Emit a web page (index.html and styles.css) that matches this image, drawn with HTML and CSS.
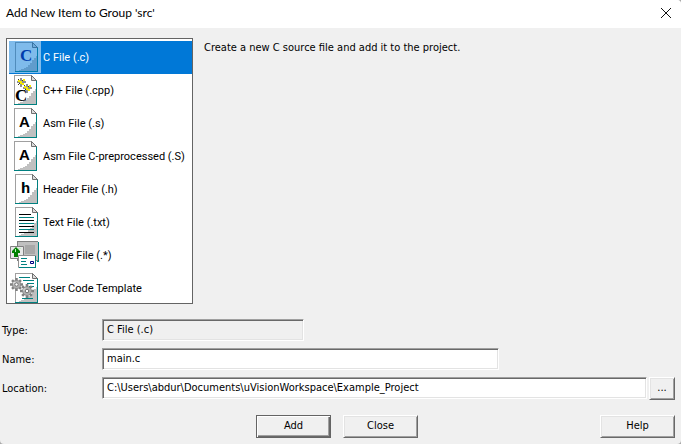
FILE: index.html
```html
<!DOCTYPE html>
<html lang="en">
<head>
    <meta charset="utf-8">
    <title>Add New Item to Group 'src'</title>
    <link rel="stylesheet" href="styles.css">
</head>
<body>
    <svg class="defs" aria-hidden="true">
        <symbol id="page" viewBox="0 0 32 32">
            <path fill="#fff" d="M6 1h18l5 5v25H6z"/>
            <path fill="#c0c0c0" d="M28 15v15H10v-1h2v-1h3v-1h2v-1h2v-2h2v-2h2v-3h2v-2h2v-2z"/>
            <path fill="#a0a0a0" d="M6 1h18v1H7v28H6z"/>
            <path fill="#008080" d="M28 6h1v25H6v-1h22z"/>
            <path fill="#dcdcdc" stroke="#707070" d="M23.500 1.500v5h5z"/>
        </symbol>
        <symbol id="gear" viewBox="0 0 16 16">
            <path fill="none" stroke="#808080" stroke-width="3" d="M8 0v16M0 8h16M2.500 2.500l11 11M13.500 2.500l-11 11"/>
            <circle cx="8" cy="8" r="5" fill="#b0b0b0" stroke="#888"/>
            <path fill="#e0e0e0" d="M4 5h3v1H5v2H4z"/>
            <circle cx="8" cy="8" r="2" fill="#fff" stroke="#666"/>
        </symbol>
    </svg>

    <form class="dialog">
        <header class="titlebar">
            <h1>Add New Item to Group 'src'</h1>
            <button type="button" class="close" aria-label="Close window">
                <svg width="12" height="12" viewBox="0 0 12 12"><path d="M1 1l10 10M11 1L1 11" fill="none" stroke="#111"/></svg>
            </button>
        </header>

        <main class="content">
            <div class="types" role="radiogroup" aria-label="Item type">
                <label class="item">
                    <input type="radio" name="type" checked>
                    <svg class="icon" viewBox="0 0 32 32"><use href="#page"/><text x="11" y="20" class="serif navy">C</text></svg>
                    <span>C File (.c)</span>
                </label>
                <label class="item">
                    <input type="radio" name="type">
                    <svg class="icon" viewBox="0 0 32 32">
                        <use href="#page" x="-1"/>
                        <path d="M8 8h9M12 4v9M14 14h9M18 10v9" fill="none" stroke="#909090" stroke-width="2"/>
                        <path d="M9 5l6 6M15 5l-6 6M15 11l6 6M21 11l-6 6" fill="none" stroke="#404020" stroke-width="1"/>
                        <path d="M9 6h2v1h2v2h2v2h-2v-1h-2V8H9zM14 5h2v2h-2zM15 12h2v1h2v2h2v2h-2v-1h-2v-2h-2zM20 11h2v2h-2z" fill="#f4e800"/>
                        <text x="6" y="27" class="serif">C</text>
                    </svg>
                    <span>C++ File (.cpp)</span>
                </label>
                <label class="item">
                    <input type="radio" name="type">
                    <svg class="icon" viewBox="0 0 32 32"><use href="#page" x="-1"/><text x="10" y="20" class="sans">A</text></svg>
                    <span>Asm File (.s)</span>
                </label>
                <label class="item">
                    <input type="radio" name="type">
                    <svg class="icon" viewBox="0 0 32 32"><use href="#page" x="-1"/><text x="10" y="20" class="sans">A</text></svg>
                    <span>Asm File C-preprocessed (.S)</span>
                </label>
                <label class="item">
                    <input type="radio" name="type">
                    <svg class="icon" viewBox="0 0 32 32"><use href="#page"/><path fill="#40e0f0" d="M15 9h1v5h-1zM15 15h1v5h-1z"/><text x="12" y="20" class="sans">h</text></svg>
                    <span>Header File (.h)</span>
                </label>
                <label class="item">
                    <input type="radio" name="type">
                    <svg class="icon" viewBox="0 0 32 32">
                        <use href="#page"/>
                        <path fill="#000" d="M10 8h12v1H10zM10 14h15v1H10zM10 20h15v1H10zM10 26h15v1H10z"/>
                        <path fill="#008080" d="M10 11h15v1H10zM10 17h15v1H10zM10 23h15v1H10z"/>
                    </svg>
                    <span>Text File (.txt)</span>
                </label>
                <label class="item">
                    <input type="radio" name="type">
                    <svg class="icon" viewBox="0 0 32 32">
                        <path fill="#808080" d="M8 2h21v20H8z"/>
                        <path fill="#c0c0c0" d="M9 3h20v18H9z"/>
                        <path fill="#a8a8a8" d="M16 6h10v9H16z"/>
                        <path fill="#008080" d="M29 3h1v20h-2v-1h1z"/>
                        <path fill="#e8e8e8" stroke="#808080" d="M1.500 7.500h13v12h-13z"/>
                        <path fill="#008000" d="M7 8l4 4v2H9v4H5v-4H3v-2z"/>
                        <path fill="#c0f0c0" d="M6 10h1v3H6zM9 9h3v1H9z"/>
                        <path fill="#fff" stroke="#909090" d="M9.500 16.500h17v12h-17z"/>
                        <path fill="#008080" d="M26 17h1v12H10v-1h16zM12 19h6v1h-6zM12 22h5v1h-5zM12 25h6v1h-6z"/>
                        <path fill="#fff" stroke="#000080" d="M21.500 22.500h3v2h-3z"/>
                    </svg>
                    <span>Image File (.*)</span>
                </label>
                <label class="item">
                    <input type="radio" name="type">
                    <svg class="icon" viewBox="0 0 32 32">
                        <use href="#page"/>
                        <path fill="#008080" d="M10 5h11v1H10zM14 8h11v1H14zM18 11h7v1h-7zM20 14h5v1h-5zM13 26h11v1H13z"/>
                        <use href="#gear" x="1" y="6" width="13" height="13"/>
                        <use href="#gear" x="11" y="12" width="14" height="14"/>
                    </svg>
                    <span>User Code Template</span>
                </label>
            </div>
            <p class="description">Create a new C source file and add it to the project.</p>
        </main>

        <section class="fields">
            <label for="type">Type:</label>
            <input id="type" class="field short" type="text" value="C File (.c)" readonly>
            <label for="name">Name:</label>
            <input id="name" class="field medium" type="text" value="main.c">
            <label for="location">Location:</label>
            <div class="location">
                <input id="location" class="field" type="text" value="C:\Users\abdur\Documents\uVisionWorkspace\Example_Project">
                <button type="button" class="button browse" aria-label="Browse">...</button>
            </div>
        </section>

        <footer class="actions">
            <button type="button" class="button default">Add</button>
            <button type="button" class="button">Close</button>
            <button type="button" class="button help">Help</button>
        </footer>
    </form>
</body>
</html>
```

FILE: styles.css
```css
* {
    box-sizing: border-box;
}

body {
    margin: 0;
    background: #a8a8a8;
    color: #000;
    font: 11px/14px "DejaVu Sans Condensed", "DejaVu Sans", sans-serif;
}

.defs {
    display: none;
}

.dialog {
    display: flex;
    flex-direction: column;
    min-height: 100vh;
    background: #f0f0f0;
    border-radius: 0 4px 4px 4px;
    overflow: hidden;
}

.titlebar {
    display: flex;
    align-items: center;
    justify-content: space-between;
    height: 28px;
    padding: 0 8px 2px 6px;
    background: #fff;
}

.titlebar h1 {
    margin: 0;
    font: 12px/16px Lato, sans-serif;
}

.close {
    display: flex;
    padding: 1px;
    border: none;
    background: none;
}

.content {
    display: flex;
    align-items: flex-start;
    gap: 11px;
    padding: 10px 6px 0;
}

/* the last row runs a little under the bottom border */
.types {
    width: 187px;
    height: 266px;
    padding: 2px 0 0 2px;
    border: 1px solid #646464;
    background: #fff;
    overflow: hidden;
    font: 11px/16px Roboto, sans-serif;
}

.item {
    position: relative;
    display: flex;
    align-items: center;
    gap: 2px;
    height: 33px;
    white-space: nowrap;
}

.item input {
    appearance: none;
    width: 0;
    height: 0;
    margin: 0 -2px 0 0;
}

.item:has(:checked) {
    background: #0078d7;
    color: #fff;
}

.item:has(:checked) .icon {
    background: #fff;
}

/* selection tint over the icon */
.item:has(:checked)::after {
    content: "";
    position: absolute;
    top: 0;
    left: 0;
    width: 32px;
    height: 32px;
    background: rgba(0, 120, 215, 0.5);
}

.icon {
    flex: none;
    align-self: flex-start;
    width: 32px;
    height: 32px;
}

.serif {
    font: bold 17px "Liberation Serif", serif;
}

.sans {
    font: bold 15px "Liberation Sans", sans-serif;
}

.navy {
    fill: #000080;
}

.description {
    margin: 3px 0 0;
}

.fields {
    display: grid;
    grid-template-columns: 93px 1fr;
    gap: 7px;
    padding: 15px 6px 0 2px;
}

.fields label {
    padding-top: 5px;
}

.field {
    width: 100%;
    height: 22px;
    padding: 0 4px 2px;
    border: 1px solid;
    border-color: #a0a0a0 #fff #fff #a0a0a0;
    box-shadow: inset 1px 1px #696969, inset -1px -1px #e3e3e3;
    border-radius: 0;
    background: #fff;
    color: #000;
    font: inherit;
    outline: none;
}

.field:read-only {
    background: #f0f0f0;
}

.short {
    max-width: 202px;
}

.medium {
    max-width: 397px;
}

.location {
    display: flex;
    gap: 2px;
}

.button {
    width: 75px;
    height: 23px;
    padding: 0 0 1px;
    border: 1px solid;
    border-color: #fff #696969 #696969 #fff;
    box-shadow: inset 1px 1px #e3e3e3, inset -1px -1px #a0a0a0;
    border-radius: 0;
    background: #f0f0f0;
    color: #000;
    font: inherit;
}

.default {
    border-color: #646464;
    box-shadow: inset 1px 1px #fff, inset -1px -1px #696969, inset -2px -2px #a0a0a0;
}

.browse {
    flex: none;
    width: 26px;
}

.actions {
    display: grid;
    grid-template-columns: 75px 75px 1fr;
    gap: 12px;
    margin-left: 37.6%;
    padding: 15px 6px 6px 0;
}

.help {
    justify-self: end;
}
```
